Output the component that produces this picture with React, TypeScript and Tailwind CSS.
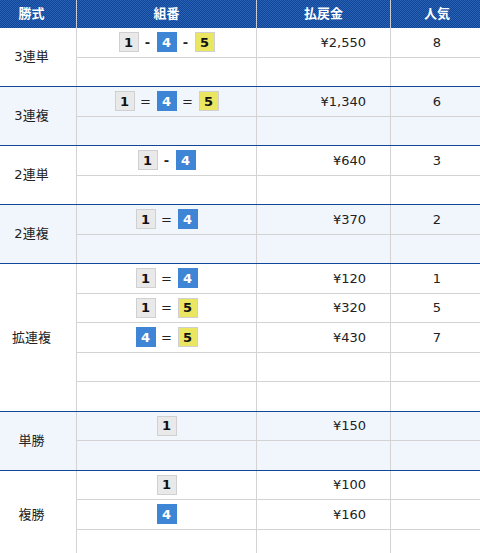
import React from 'react';

type Row = { combo: (number | string)[]; amount: string; pop: string };
type Group = { label: string; shaded: boolean; rows: (Row | null)[] };

const groups: Group[] = [
    { label: '3連単', shaded: false, rows: [{ combo: [1, '-', 4, '-', 5], amount: '¥2,550', pop: '8' }, null] },
    { label: '3連複', shaded: true, rows: [{ combo: [1, '=', 4, '=', 5], amount: '¥1,340', pop: '6' }, null] },
    { label: '2連単', shaded: false, rows: [{ combo: [1, '-', 4], amount: '¥640', pop: '3' }, null] },
    { label: '2連複', shaded: true, rows: [{ combo: [1, '=', 4], amount: '¥370', pop: '2' }, null] },
    {
        label: '拡連複',
        shaded: false,
        rows: [
            { combo: [1, '=', 4], amount: '¥120', pop: '1' },
            { combo: [1, '=', 5], amount: '¥320', pop: '5' },
            { combo: [4, '=', 5], amount: '¥430', pop: '7' },
            null,
            null,
        ],
    },
    { label: '単勝', shaded: true, rows: [{ combo: [1], amount: '¥150', pop: '' }, null] },
    {
        label: '複勝',
        shaded: false,
        rows: [{ combo: [1], amount: '¥100', pop: '' }, { combo: [4], amount: '¥160', pop: '' }, null],
    },
];

const boatStyle: Record<number, string> = {
    1: 'bg-[#e9e9e9] border-[#d0d0d0] text-[#111]',
    4: 'bg-[#3f85d5] border-[#3f85d5] text-white',
    5: 'bg-[#ebe661] border-[#d0d0d0] text-[#111]',
};

const Boat: React.FC<{ n: number }> = ({ n }) => (
    <span className={`w-5 h-5 border flex items-center justify-center text-[13px] font-bold leading-none ${boatStyle[n]}`}>
        {n}
    </span>
);

const Combo: React.FC<{ items: (number | string)[] }> = ({ items }) => (
    <div className="flex items-center justify-center">
        {items.map((it, i) =>
            typeof it === 'number' ? (
                <Boat key={i} n={it} />
            ) : it === '-' ? (
                <span key={i} className="w-[18px] text-center font-bold text-[13px] leading-none">-</span>
            ) : (
                <span key={i} className="w-[22px] text-center text-[13px] leading-none">=</span>
            )
        )}
    </div>
);

const HeaderCell: React.FC<{ className: string; children: React.ReactNode }> = ({ className, children }) => (
    <div className={`flex items-center justify-center h-full ${className}`}>{children}</div>
);

const App: React.FC = () => {
    return (
        <div
            className="w-[480px] h-[553px] overflow-hidden bg-white text-[13px] text-[#222]"
            style={{ fontFamily: '"DejaVu Sans", "Noto Sans CJK JP", sans-serif' }}
        >
            <div className="flex h-[28px] bg-[image:repeating-conic-gradient(#0b4698_0_25%,#2c61b3_0_50%)] bg-[length:2px_2px] text-white font-bold">
                <HeaderCell className="w-[77px] border-r border-[#c9ccd3] pr-[13px]">勝式</HeaderCell>
                <HeaderCell className="w-[180px] border-r border-[#c9ccd3]">組番</HeaderCell>
                <HeaderCell className="w-[134px] border-r border-[#c9ccd3]">払戻金</HeaderCell>
                <HeaderCell className="flex-1 pl-[3px]">人気</HeaderCell>
            </div>

            {groups.map((g) => (
                <div
                    key={g.label}
                    className={`flex border-b border-[#114799] ${g.shaded ? 'bg-[#f1f6fd]' : 'bg-white'}`}
                >
                    <div className="w-[77px] shrink-0 border-r border-[#d3d3d3] flex items-center justify-center pr-[13px]">
                        {g.label}
                    </div>
                    <div className="flex-1 flex flex-col">
                        {g.rows.map((r, i) => {
                            const last = i === g.rows.length - 1;
                            return (
                                <div
                                    key={i}
                                    className={`flex ${last ? 'h-[28.5px]' : 'h-[29.5px] border-b border-[#d3d3d3]'}`}
                                >
                                    <div className="w-[180px] shrink-0 border-r border-[#d3d3d3] flex items-center justify-center">
                                        {r && <Combo items={r.combo} />}
                                    </div>
                                    <div className="w-[134px] shrink-0 border-r border-[#d3d3d3] flex items-center justify-end pr-6">
                                        {r?.amount}
                                    </div>
                                    <div className="flex-1 flex items-center justify-center pl-[3px]">{r?.pop}</div>
                                </div>
                            );
                        })}
                    </div>
                </div>
            ))}
        </div>
    );
};

export default App;
